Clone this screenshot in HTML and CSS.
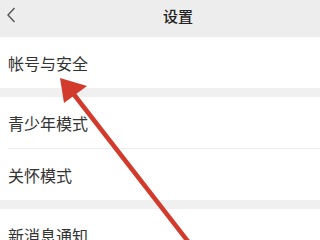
FILE: index.html
```html
<!DOCTYPE html>
<html lang="zh-CN">
<head>
<meta charset="utf-8">
<link rel="stylesheet" href="styles.css">
</head>
<body>
<div class="page">
  <header class="bar">
    <span class="back">
      <svg width="10" height="16" viewBox="0 0 10 16"><path d="M8.5 1 L2 8 L8.5 15" fill="none" stroke="#555" stroke-width="1.4"/></svg>
    </span>
    <h1 class="title">设置</h1>
  </header>
  <section class="group">
    <div class="row">帐号与安全</div>
  </section>
  <section class="group">
    <div class="row">青少年模式</div>
    <div class="row">关怀模式</div>
  </section>
  <section class="group">
    <div class="row">新消息通知</div>
  </section>
  <svg class="arrow" width="320" height="240" viewBox="0 0 320 240">
    <line x1="72" y1="92" x2="190" y2="244" stroke="#d23a2c" stroke-width="4.5"/>
    <polygon points="60,78 87,86 64,103" fill="#d23a2c"/>
  </svg>
</div>
</body>
</html>
```
FILE: styles.css
```css
html, body {
  margin: 0;
  padding: 0;
}
body {
  width: 320px;
  height: 240px;
  overflow: hidden;
  background: #f0f0f0;
  font-family: "Noto Sans CJK SC", "Noto Sans", sans-serif;
}
.page {
  position: relative;
  width: 320px;
  height: 240px;
  overflow: hidden;
}
.bar {
  height: 37px;
  background: #ededed;
  display: flex;
  align-items: center;
}
.back {
  display: flex;
  align-items: center;
  padding-left: 6px;
  width: 18px;
  height: 37px;
  margin-top: -7px;
}
.title {
  margin: -6px 0 0 139px;
  font-size: 15px;
  font-weight: 500;
  color: #222;
  line-height: 20px;
}
.group {
  background: #fff;
  margin-bottom: 9px;
}
.row {
  height: 51px;
  display: flex;
  align-items: center;
  margin-left: 8px;
  font-size: 16px;
  color: #333;
  box-sizing: border-box;
}
.row + .row {
  border-top: 1px solid #ececec;
  height: 52px;
}
.arrow {
  position: absolute;
  left: 0;
  top: 0;
}
```
